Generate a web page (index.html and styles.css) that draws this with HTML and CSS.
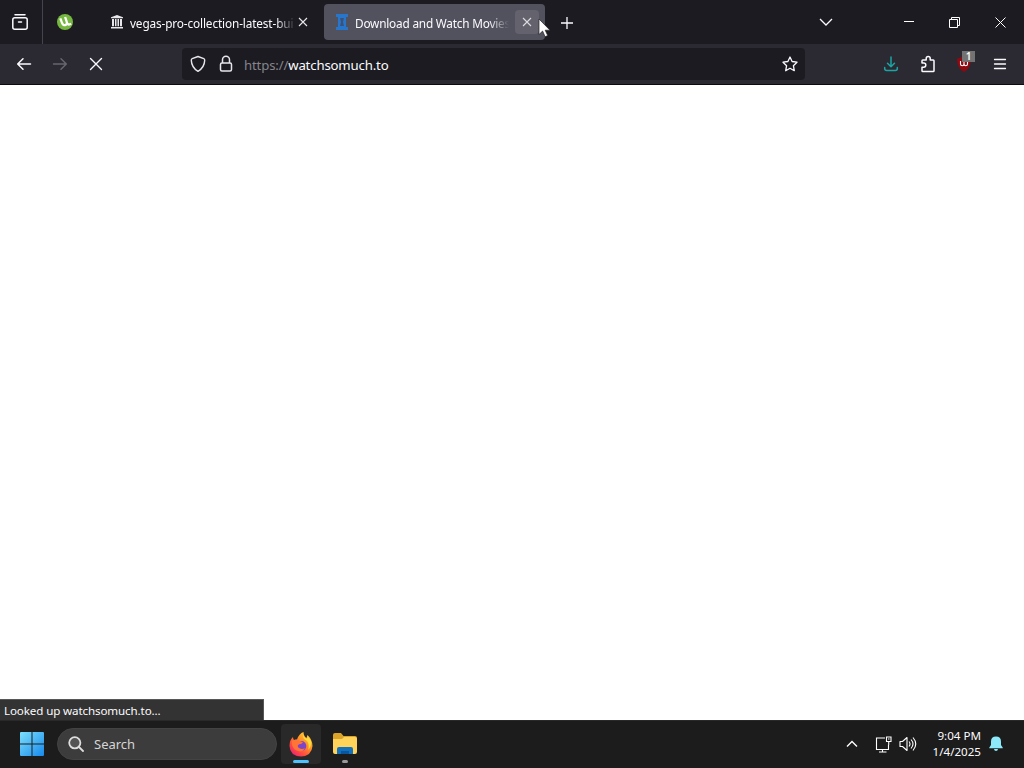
FILE: index.html
```
<!DOCTYPE html>
<html lang="en">
<head>
  <meta charset="UTF-8" />
  <title>Download and Watch Movies</title>
  <link rel="stylesheet" href="styles.css">
</head>
<body>
  <div class="tab-bar">
    <div class="firefox-view">
      <svg width="18" height="18" viewBox="0 0 18 18" fill="none" stroke="#fbfbfe" stroke-width="1.5" stroke-linecap="round">
        <path d="M4 1.8h10M3.800 4.800h10.400q2 0 2 2v7.400q0 2-2 2H3.800q-2 0-2-2V6.800q0-2 2-2zM7.500 9h3" />
      </svg>
    </div>
    <div class="pinned-tab">
      <svg width="16" height="16" viewBox="0 0 16 16">
        <circle cx="8" cy="8" r="8" fill="#76b83f" />
        <path d="M3.300 4.300l1.900 5q1.200 2.700 3.500 1.600 2-1 1-3.200L8.100 3M9.900 9.700q1.700 1.500 4.300.1" fill="none" stroke="#fff" stroke-width="2.300" />
      </svg>
    </div>
    <div class="tab">
      <svg width="14" height="14" viewBox="0 0 14 14" fill="#e8e8ea">
        <path d="M7 0l6 2.300v1H1v-1zM1 12h12v1.500H1zM2 4h2v7.300H2zM5 4h1.500v7.300H5zM7.500 4H9v7.300H7.500zM10 4h2v7.300h-2z" />
      </svg>
      <span class="tab-title">vegas-pro-collection-latest-bui</span>
      <span class="tab-close">
        <svg width="10" height="10" viewBox="0 0 10 10" stroke="#e8e8ea" stroke-width="1.100"><path d="M1 1l8 8M9 1L1 9" /></svg>
      </span>
    </div>
    <div class="tab active">
      <svg width="14" height="16" viewBox="0 0 14 16">
        <path d="M1 0h12v3h-2v10h2v3H1v-3h2V3H1z" fill="#2876cc" />
        <path d="M5 4h4L8 8l1 4H5l1-4z" fill="#3c5177" />
      </svg>
      <span class="tab-title">Download and Watch Movies</span>
      <span class="tab-close">
        <svg width="10" height="10" viewBox="0 0 10 10" stroke="#dcdce0" stroke-width="1.100"><path d="M1 1l8 8M9 1L1 9" /></svg>
      </span>
      <svg class="cursor" width="13" height="20" viewBox="0 0 13 20">
        <path d="M1 1v15.500l3.600-3.400 2.500 5.600 2.600-1.200-2.500-5.300H12z" fill="#fff" stroke="#222" stroke-width=".7" />
      </svg>
    </div>
    <svg class="new-tab" width="12" height="12" viewBox="0 0 12 12" stroke="#fbfbfe" stroke-width="1.300"><path d="M6 0v12M0 6h12" /></svg>
    <div class="window-controls">
      <svg width="14" height="10" viewBox="0 0 14 10" fill="none" stroke="#fbfbfe" stroke-width="1.300"><path d="M1 2l6 6 6-6" /></svg>
      <svg width="10" height="10" viewBox="0 0 10 10" stroke="#fff"><path d="M0 4.500h10" /></svg>
      <svg width="11" height="11" viewBox="0 0 11 11" fill="none" stroke="#fff"><path d="M.5 2.500h8v8h-8zM2.500 2.500v-2h8v8h-2" /></svg>
      <svg width="11" height="11" viewBox="0 0 11 11" stroke="#fff"><path d="M.5.5l10 10M10.500.5l-10 10" /></svg>
    </div>
  </div>

  <div class="nav-bar">
    <div class="nav-buttons">
      <svg width="16" height="14" viewBox="0 0 16 14" fill="none" stroke="#fbfbfe" stroke-width="1.500" stroke-linecap="round" stroke-linejoin="round"><path d="M14.500 7H1.800M7 1.700L1.700 7 7 12.300" /></svg>
      <svg width="16" height="14" viewBox="0 0 16 14" fill="none" stroke="#66666d" stroke-width="1.500" stroke-linecap="round" stroke-linejoin="round"><path d="M1.500 7h12.700M9 1.700L14.300 7 9 12.300" /></svg>
      <svg width="16" height="14" viewBox="0 0 16 14" stroke="#fbfbfe" stroke-width="1.400" stroke-linecap="round"><path d="M2.500 1.500l11 11M13.500 1.500l-11 11" /></svg>
    </div>
    <div class="url-bar">
      <svg width="16" height="18" viewBox="0 0 16 18" fill="none" stroke="#e6e6ea" stroke-width="1.400" stroke-linejoin="round"><path d="M8 1.500l5.800 2.200q1 .4.900 1.700-.3 7.200-6.700 10.900Q1.600 12.600 1.300 5.400q-.1-1.300.9-1.700z" /></svg>
      <svg width="14" height="18" viewBox="0 0 14 18" fill="none" stroke="#e6e6ea" stroke-width="1.500"><rect x="1.500" y="8" width="11" height="8" rx="1.500" /><path d="M3.500 8V4.800a3.500 3.500 0 0 1 7 0V8" /></svg>
      <span class="url"><span class="scheme">https://</span>watchsomuch.to</span>
      <svg class="star" width="16" height="16" viewBox="0 0 16 16" fill="none" stroke="#fbfbfe" stroke-width="1.300" stroke-linejoin="round"><path d="M8 1l2.100 4.500 4.900.7-3.600 3.500.9 5L8 12.300l-4.300 2.400.9-5L1 6.200l4.900-.7z" /></svg>
    </div>
    <div class="toolbar">
      <svg width="16" height="16" viewBox="0 0 16 16" fill="none" stroke="#1ba5a3" stroke-width="1.500" stroke-linecap="round" stroke-linejoin="round"><path d="M8 1v9.500M4.500 7.300L8 10.800l3.500-3.500M1.700 11.500v1q0 2 2 2h8.600q2 0 2-2v-1" /></svg>
      <svg width="16" height="18" viewBox="0 0 16 18" fill="none" stroke="#fbfbfe" stroke-width="1.500" stroke-linejoin="round"><path d="M2 8V5.800q0-.8.800-.8h3.400V3.500a2 2 0 0 1 4 0V5h3q.8 0 .8.8v9.900q0 .8-.8.800H2.800q-.8 0-.8-.8v-3.500h1.700a2 2 0 0 0 0-4.200z" /></svg>
      <div class="ublock">
        <svg width="14" height="16" viewBox="0 0 14 16"><path d="M7 0l7 3q0 9-7 13Q0 12 0 3z" fill="#8f0910" /><path d="M3.500 5v3q0 1.700 1.700 1.700T7 8V5v3q0 1.700 1.700 1.700T10.500 8V5" fill="none" stroke="#fff" stroke-width="1.100" /></svg>
        <span class="badge">1</span>
      </div>
      <svg width="14" height="12" viewBox="0 0 14 12" stroke="#fbfbfe" stroke-width="1.300" stroke-linecap="round"><path d="M1.500 1.500h11M1.500 6h11M1.500 10.500h11" /></svg>
    </div>
  </div>

  <div class="page">
    <div class="status">Looked up watchsomuch.to...</div>
  </div>

  <div class="taskbar">
    <svg class="start" width="24" height="24" viewBox="0 0 24 24">
      <defs>
        <linearGradient id="win" x1="0" y1="0" x2="24" y2="24" gradientUnits="userSpaceOnUse"><stop stop-color="#7de0fc" /><stop offset="1" stop-color="#1689ec" /></linearGradient>
      </defs>
      <path d="M1 0h10.500v11.500H0V1q0-1 1-1zM12.500 0H23q1 0 1 1v10.500H12.500zM0 12.500h11.500V24H1q-1 0-1-1zM12.500 12.500H24V23q0 1-1 1H12.500z" fill="url(#win)" />
    </svg>
    <div class="search">
      <svg width="16" height="16" viewBox="0 0 16 16" fill="#545454" stroke="#dedede" stroke-width="1.800" stroke-linecap="round"><circle cx="6.800" cy="6.800" r="5.600" /><path d="M11 11l4 4" /></svg>
      <span>Search</span>
    </div>
    <div class="app focused">
      <svg width="24" height="25" viewBox="0 0 24 25">
        <defs>
          <linearGradient id="fox" x1="1" y1="0" x2=".2" y2="1"><stop offset="0" stop-color="#fff04a" /><stop offset=".4" stop-color="#ff9a26" /><stop offset=".75" stop-color="#ff4b40" /><stop offset="1" stop-color="#e92374" /></linearGradient>
        </defs>
        <path d="M4 5q0 2 1 3l3-.5Q10 1.500 14.500 0q0 4 3 6l1-3q5 5 5 11-.8 10-11.500 10.500Q1 24 .5 14 .5 8 4 5z" fill="url(#fox)" />
        <circle cx="12.300" cy="14" r="5" fill="#7d46c8" />
        <path d="M3 9q4-3 8 0l3 1.300q-1 2-4 2-2 1-1 3 3 3 7 1-3 5-9 2-5-3-4-9.300z" fill="#ff7538" />
        <path d="M14 1q-1 5 4 8 3 4 1 9 4-4 3-9l-3-4-1 2q-4-2-4-6z" fill="#ffdb3c" />
      </svg>
      <span class="indicator"></span>
    </div>
    <div class="app">
      <svg width="26" height="24" viewBox="0 0 26 24">
        <path d="M1 3q0-2 2-2h6l2.500 3H23q2 0 2 2v5H1z" fill="#dba329" />
        <path d="M1 7h9l2-2h11q2 0 2 2v13q0 2-2 2H3q-2 0-2-2z" fill="#ffd35a" />
        <path d="M5 22v-5q0-2 2-2h12q2 0 2 2v5z" fill="#1370bd" />
        <path d="M9 22v-3h8v3z" fill="#0b559d" />
      </svg>
      <span class="indicator small"></span>
    </div>
    <div class="tray">
      <svg width="12" height="8" viewBox="0 0 12 8" fill="none" stroke="#fff" stroke-width="1.400"><path d="M1 6.500l5-5 5 5" /></svg>
      <svg width="17" height="17" viewBox="0 0 17 17" fill="none" stroke="#fff" stroke-width="1.100"><path d="M10 2H1.500v11.500h12V9M4 16h7.500M7.500 13.500V16M11.500 1h4.500v4.500h-4.500zM13.700 5.500V9M13 3h1.500" /></svg>
      <svg width="18" height="16" viewBox="0 0 18 16" fill="none" stroke="#fff" stroke-width="1.100" stroke-linejoin="round"><path d="M1 5.500h2.500L8 1.500v13l-4.500-4H1zM10 5.500q2 2.500 0 5M12 3.500q4 4.500 0 9M14 1.500q5.500 6.500 0 13" /></svg>
      <div class="clock"><span>9:04 PM</span><span>1/4/2025</span></div>
      <svg width="14" height="16" viewBox="0 0 14 16" fill="#8de9fa"><path d="M7 .5q5 0 5 5v3.500l1.700 2.500v.8H.3v-.8L2 9V5.500q0-5 5-5zM5 13h4q-.3 2-2 2t-2-2z" /></svg>
    </div>
  </div>
</body>
</html>
```
FILE: styles.css
```
* {
  margin: 0;
  padding: 0;
  box-sizing: border-box;
}

body {
  width: 1024px;
  height: 768px;
  display: flex;
  flex-direction: column;
  overflow: hidden;
  background: #fff;
  color: #fbfbfe;
  font-family: "Noto Sans", sans-serif;
  font-size: 12px;
}

svg {
  display: block;
  flex: none;
}

.tab-bar {
  height: 44px;
  display: flex;
  align-items: center;
  background: #1c1b22;
}

.firefox-view {
  width: 43px;
  height: 44px;
  padding-left: 11px;
  display: flex;
  align-items: center;
  border-right: 1px solid #45444c;
}

.pinned-tab {
  width: 60px;
  padding-left: 14px;
}

.tab {
  position: relative;
  width: 221px;
  height: 36px;
  padding: 0 6px 0 7px;
  display: flex;
  align-items: center;
  border-radius: 4px;
}

.tab.active {
  padding-left: 11px;
  background: #52515e;
}

.tab-title {
  width: 166px;
  margin-left: 6px;
  padding-top: 2px;
  overflow: hidden;
  white-space: nowrap;
  font-size: 11.8px;
  letter-spacing: -0.13px;
  line-height: 20px;
  mask-image: linear-gradient(to left, transparent, black 20px);
}

.active .tab-title {
  width: 156px;
  letter-spacing: -0.2px;
}

.tab-close {
  width: 24px;
  height: 24px;
  flex: none;
  display: flex;
  align-items: center;
  justify-content: center;
  margin-left: -5px;
  border-radius: 4px;
}

.active .tab-close {
  margin-left: 6px;
  background: #63626d;
}

.cursor {
  position: absolute;
  left: 214px;
  top: 14px;
}

.new-tab {
  margin: 2px 0 0 16px;
}

.window-controls {
  margin-left: auto;
  padding-right: 18px;
  display: flex;
  align-items: center;
}

.window-controls svg + svg {
  margin-left: 35px;
}

.window-controls svg:nth-child(2) {
  margin-left: 71px;
}

.nav-bar {
  height: 41px;
  display: flex;
  align-items: center;
  background: #2b2a33;
  border-bottom: 1px solid #0c0b10;
}

.nav-buttons {
  width: 182px;
  padding-left: 16px;
  display: flex;
  gap: 20px;
}

.url-bar {
  width: 623px;
  height: 32px;
  padding: 0 7px 0 8px;
  display: flex;
  align-items: center;
  background: #1c1b22;
  border-radius: 4px;
}

.url-bar svg + svg {
  margin-left: 13px;
}

.url {
  margin-left: 11px;
  padding-top: 2px;
  font-size: 13.2px;
  letter-spacing: -0.16px;
}

.scheme {
  color: #85848b;
}

.url-bar .star {
  margin-left: auto;
}

.toolbar {
  flex: 1;
  padding-right: 17px;
  display: flex;
  align-items: center;
  justify-content: flex-end;
}

.toolbar svg + svg {
  margin-left: 21px;
}

.ublock {
  position: relative;
  margin: 0 22px 0 21px;
}

.badge {
  position: absolute;
  left: 5px;
  top: -5px;
  width: 13px;
  height: 11px;
  background: #737373;
  font-size: 10px;
  font-weight: 600;
  line-height: 11px;
  text-align: center;
}

.page {
  flex: 1;
  display: flex;
  align-items: flex-end;
  background: #fff;
}

.status {
  width: 264px;
  height: 21px;
  padding-left: 4px;
  background: #333;
  border-top: 1px solid #575757;
  border-right: 1px solid #575757;
  font-size: 11.6px;
  letter-spacing: -0.12px;
  line-height: 22px;
}

.taskbar {
  height: 48px;
  padding-bottom: 1px;
  display: flex;
  align-items: center;
  background: #1c1c1c;
  border-top: 1px solid #292929;
}

.start {
  margin-left: 20px;
}

.search {
  width: 220px;
  height: 32px;
  margin: 0 4px 0 13px;
  padding-left: 10px;
  display: flex;
  align-items: center;
  gap: 10px;
  background: #3c3c3c;
  border: 1px solid #434343;
  border-radius: 16px;
  color: #d5d5d5;
  font-size: 13px;
}

.app {
  position: relative;
  width: 40px;
  height: 40px;
  margin-right: 4px;
  display: flex;
  align-items: center;
  justify-content: center;
  border-radius: 4px;
}

.focused {
  background: #292929;
}

.indicator {
  position: absolute;
  bottom: 1px;
  left: 12px;
  width: 16px;
  height: 3px;
  border-radius: 2px;
  background: #4cc2ff;
}

.indicator.small {
  left: 17px;
  width: 6px;
  background: #9a9a9a;
}

.tray {
  margin-left: auto;
  padding-right: 21px;
  display: flex;
  align-items: center;
}

.tray svg:nth-child(2) {
  margin-left: 17px;
}

.tray svg:nth-child(3) {
  margin-left: 7px;
}

.clock {
  width: 64px;
  margin-right: 8px;
  display: flex;
  flex-direction: column;
  text-align: right;
  font-size: 11.6px;
  line-height: 16px;
}
```
